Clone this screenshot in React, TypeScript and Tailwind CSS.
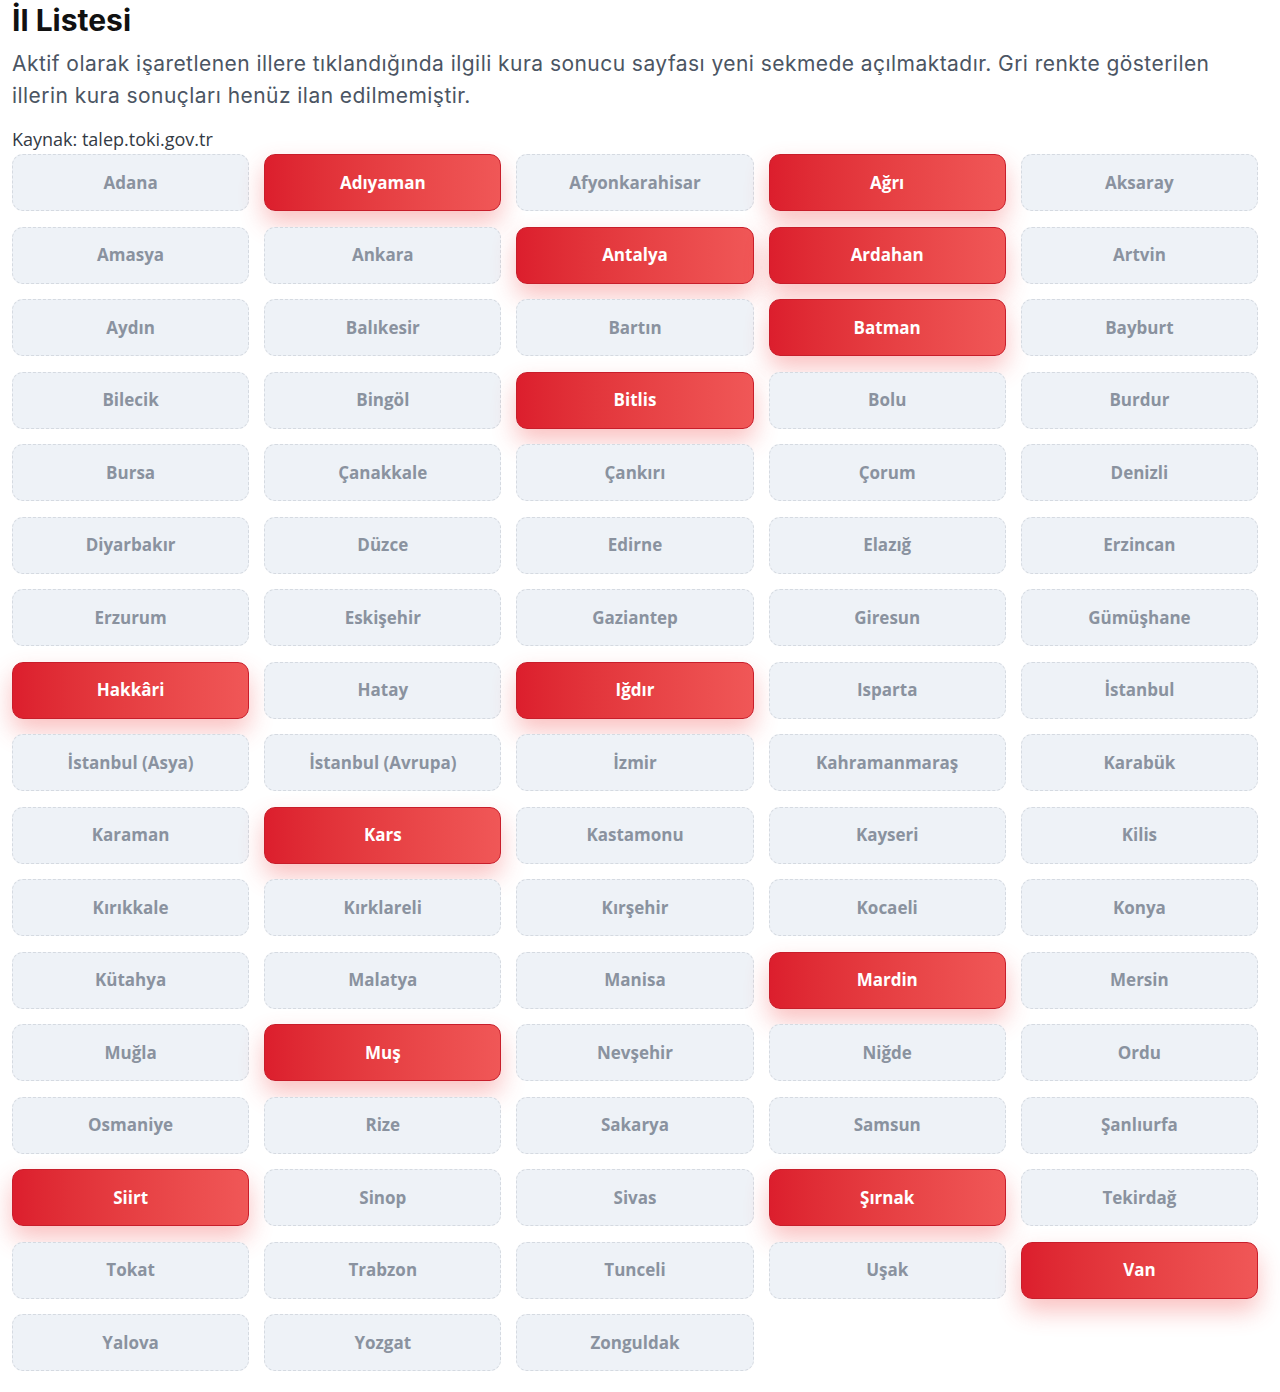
import React from 'react';

type Il = { name: string; active?: boolean };

const iller: Il[] = [
  { name: 'Adana' }, { name: 'Adıyaman', active: true }, { name: 'Afyonkarahisar' }, { name: 'Ağrı', active: true }, { name: 'Aksaray' },
  { name: 'Amasya' }, { name: 'Ankara' }, { name: 'Antalya', active: true }, { name: 'Ardahan', active: true }, { name: 'Artvin' },
  { name: 'Aydın' }, { name: 'Balıkesir' }, { name: 'Bartın' }, { name: 'Batman', active: true }, { name: 'Bayburt' },
  { name: 'Bilecik' }, { name: 'Bingöl' }, { name: 'Bitlis', active: true }, { name: 'Bolu' }, { name: 'Burdur' },
  { name: 'Bursa' }, { name: 'Çanakkale' }, { name: 'Çankırı' }, { name: 'Çorum' }, { name: 'Denizli' },
  { name: 'Diyarbakır' }, { name: 'Düzce' }, { name: 'Edirne' }, { name: 'Elazığ' }, { name: 'Erzincan' },
  { name: 'Erzurum' }, { name: 'Eskişehir' }, { name: 'Gaziantep' }, { name: 'Giresun' }, { name: 'Gümüşhane' },
  { name: 'Hakkâri', active: true }, { name: 'Hatay' }, { name: 'Iğdır', active: true }, { name: 'Isparta' }, { name: 'İstanbul' },
  { name: 'İstanbul (Asya)' }, { name: 'İstanbul (Avrupa)' }, { name: 'İzmir' }, { name: 'Kahramanmaraş' }, { name: 'Karabük' },
  { name: 'Karaman' }, { name: 'Kars', active: true }, { name: 'Kastamonu' }, { name: 'Kayseri' }, { name: 'Kilis' },
  { name: 'Kırıkkale' }, { name: 'Kırklareli' }, { name: 'Kırşehir' }, { name: 'Kocaeli' }, { name: 'Konya' },
  { name: 'Kütahya' }, { name: 'Malatya' }, { name: 'Manisa' }, { name: 'Mardin', active: true }, { name: 'Mersin' },
  { name: 'Muğla' }, { name: 'Muş', active: true }, { name: 'Nevşehir' }, { name: 'Niğde' }, { name: 'Ordu' },
  { name: 'Osmaniye' }, { name: 'Rize' }, { name: 'Sakarya' }, { name: 'Samsun' }, { name: 'Şanlıurfa' },
  { name: 'Siirt', active: true }, { name: 'Sinop' }, { name: 'Sivas' }, { name: 'Şırnak', active: true }, { name: 'Tekirdağ' },
  { name: 'Tokat' }, { name: 'Trabzon' }, { name: 'Tunceli' }, { name: 'Uşak' }, { name: 'Van', active: true },
  { name: 'Yalova' }, { name: 'Yozgat' }, { name: 'Zonguldak' },
];

function IlButton({ il }: { il: Il }) {
  if (il.active) {
    return (
      <a
        href="#"
        className="flex h-[57px] items-center justify-center rounded-[11px] border border-[#c81e2b] bg-gradient-to-r from-[#dc1e2d] to-[#f05757] text-[17px] font-bold text-white shadow-[0_12px_24px_rgba(239,68,68,0.33)]"
      >
        {il.name}
      </a>
    );
  }
  return (
    <div className="flex h-[57px] items-center justify-center rounded-[11px] border border-dashed border-[#d5dae1] bg-[#eef2f7] text-[17px] font-bold text-[#8a929f]">
      {il.name}
    </div>
  );
}

export default function App() {
  return (
    <div className="min-h-[1392px] bg-white pl-[12px] pr-[22px] font-['Open_Sans',sans-serif]">
      {/* başlık */}
      <h1 className="pt-[1px] text-[30px] font-bold leading-[38px] text-[#111111] font-['Inter',sans-serif]">İl Listesi</h1>
      <p className="mt-[9px] text-[21px] leading-[32px] tracking-[0.45px] text-[#4b5563] font-['Inter',sans-serif]">
        Aktif olarak işaretlenen illere tıklandığında ilgili kura sonucu sayfası yeni sekmede açılmaktadır. Gri renkte gösterilen
        <br />
        illerin kura sonuçları henüz ilan edilmemiştir.
      </p>
      <p className="mt-[15px] text-[18px] font-medium leading-[24px] text-[#333a44]">Kaynak: talep.toki.gov.tr</p>
      <div className="mt-[3px] grid grid-cols-5 gap-x-[15px] gap-y-[15.5px]">
        {iller.map((il) => (
          <IlButton key={il.name} il={il} />
        ))}
      </div>
    </div>
  );
}
